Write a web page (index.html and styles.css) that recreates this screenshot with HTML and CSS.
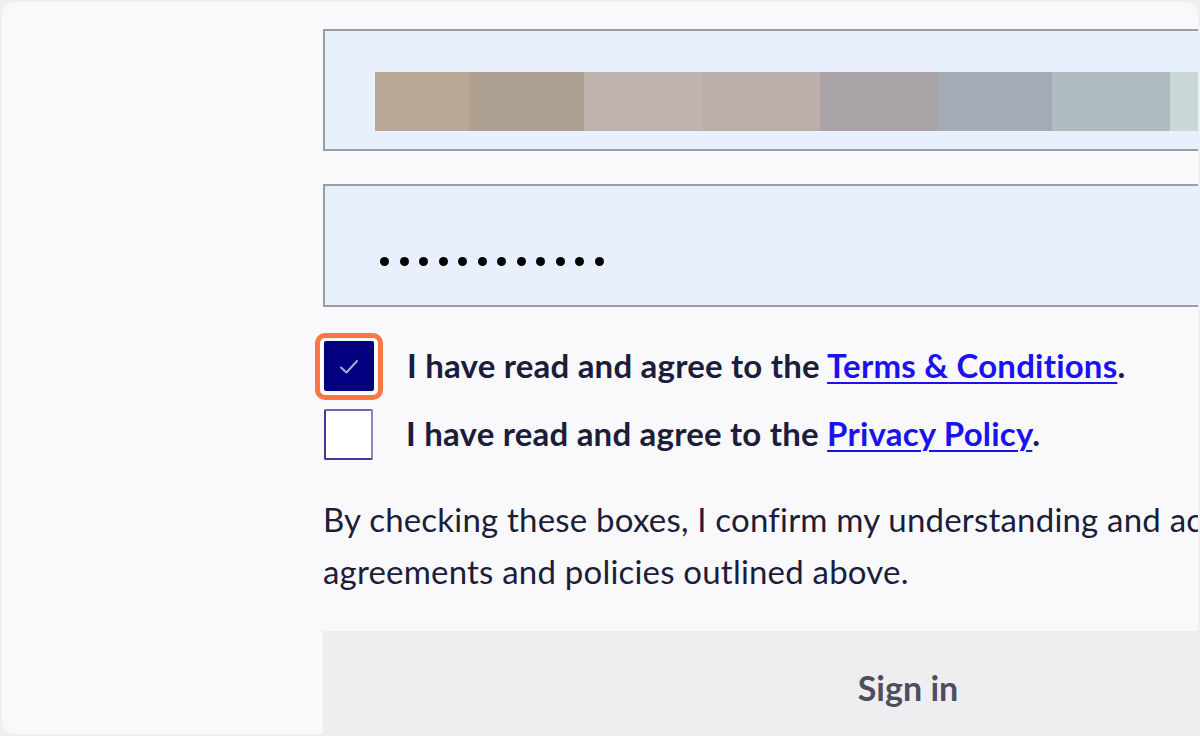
FILE: index.html
```html
<!DOCTYPE html>
<html lang="en">
<head>
<meta charset="utf-8">
<title>Sign in</title>
<link rel="stylesheet" href="styles.css">
</head>
<body>
<div class="frame">
  <div class="card">
    <form class="form">
      <div class="field field-user">
        <div class="blur">
          <span class="b1"></span><span class="b2"></span><span class="b3"></span><span class="b4"></span><span class="b5"></span><span class="b6"></span><span class="b7"></span><span class="b8"></span>
        </div>
      </div>
      <div class="field field-pass">
        <div class="dots">
          <span></span><span></span><span></span><span></span><span></span><span></span><span></span><span></span><span></span><span></span><span></span><span></span>
        </div>
      </div>
      <div class="checks">
        <label class="check">
          <span class="box checked focused">
            <svg viewBox="0 0 50 50" width="50" height="50"><path d="M17 26.5 L22.5 31.5 L33 20" fill="none" stroke="#aeabcf" stroke-width="2" stroke-linecap="round" stroke-linejoin="round"/></svg>
          </span>
          <span class="label">I have read and agree to the <a href="#">Terms &amp; Conditions</a>.</span>
        </label>
        <label class="check">
          <span class="box"></span>
          <span class="label">I have read and agree to the <a href="#">Privacy Policy</a>.</span>
        </label>
      </div>
      <p class="note">By checking these boxes, I confirm my understanding and acceptance of the agreements and policies outlined above.</p>
      <button type="button" class="signin">Sign in</button>
    </form>
  </div>
</div>
</body>
</html>
```

FILE: styles.css
```css
html, body {
  margin: 0;
  padding: 0;
}

body {
  width: 1200px;
  height: 736px;
  background: #efeff2;
  font-family: Lato, "Noto Sans", sans-serif;
  overflow: hidden;
}

.frame {
  padding: 2px;
  height: 736px;
  box-sizing: border-box;
}

.card {
  height: 732px;
  background: #f9f9fb;
  border-radius: 12px;
  overflow: hidden;
}

.form {
  width: 1168px;
  margin-left: 321px;
  padding-top: 27px;
  display: flex;
  flex-direction: column;
}

.field {
  box-sizing: border-box;
  border: 2px solid #9b9da6;
  background: #e8f0fe;
}

.field-user {
  height: 122px;
  padding-top: 41px;
  padding-left: 50px;
}

.blur {
  display: flex;
  height: 59px;
  filter: blur(0.6px);
}

.blur span { display: block; height: 100%; }
.blur .b1 { width: 95px; background: #b9a796; }
.blur .b2 { width: 114px; background: #ada091; }
.blur .b3 { width: 118px; background: #c0b5ae; }
.blur .b4 { width: 118px; background: #bcaeab; }
.blur .b5 { width: 118px; background: #aaa4a9; }
.blur .b6 { width: 114px; background: #a4abb7; }
.blur .b7 { width: 118px; background: #b1bcc1; }
.blur .b8 { width: 120px; background: #cad8d8; }

.field-pass {
  margin-top: 33px;
  height: 123px;
  padding-left: 55px;
  display: flex;
  align-items: center;
  padding-top: 31px;
}

.dots {
  display: flex;
  gap: 10.5px;
}

.dots span {
  width: 9px;
  height: 9px;
  border-radius: 50%;
  background: #000;
}

.checks {
  margin-top: 34px;
  display: flex;
  flex-direction: column;
  gap: 18px;
}

.check {
  display: flex;
  align-items: center;
  gap: 33px;
  margin-left: 1px;
}

.box {
  position: relative;
  width: 49px;
  height: 51px;
  box-sizing: border-box;
  background: #ffffff;
  border: 2px solid #3b3b9a;
  border-top-color: #6a6ab5;
  border-right-color: #8888c4;
  border-radius: 2px;
  flex: none;
}

.box.checked {
  width: 50px;
  height: 50px;
  background: #000080;
  border: none;
}

.box svg {
  display: block;
}

.box.focused::before {
  content: "";
  position: absolute;
  left: -9px;
  top: -8px;
  right: -9px;
  bottom: -9px;
  border: 5px solid #fb7645;
  border-radius: 10px;
  box-shadow: inset 0 0 0 2px #ffffff;
}

.label {
  font-size: 33px;
  line-height: 40px;
  padding-bottom: 3px;
  font-weight: 700;
  color: #1b1d3a;
  letter-spacing: 0.2px;
}

.label a {
  color: #1a12f0;
  text-decoration: underline;
  text-decoration-thickness: 2px;
  text-underline-offset: 4px;
}

.note {
  margin: 33px 0 0 0;
  font-size: 33px;
  line-height: 52px;
  color: #1b1d3a;
  letter-spacing: 0.2px;
}

.signin {
  margin-top: 34px;
  height: 116px;
  border: none;
  background: #eeeef1;
  font-family: Lato, "Noto Sans", sans-serif;
  font-size: 34px;
  font-weight: 700;
  color: #4e4e5e;
  padding: 0 0 4px 2px;
}
```
